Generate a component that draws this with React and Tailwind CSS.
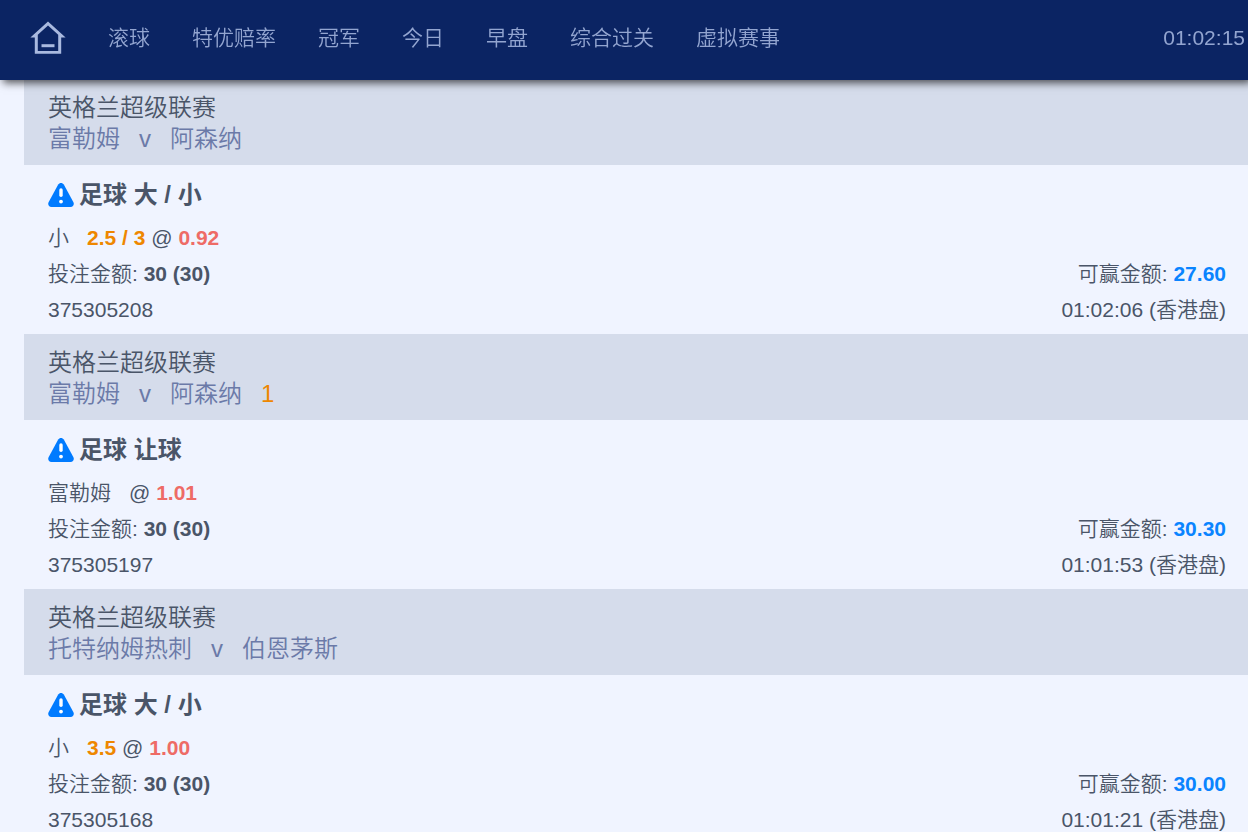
const navItems = ['滚球', '特优赔率', '冠军', '今日', '早盘', '综合过关', '虚拟赛事'];

const bets = [
  {
    id: '375305208',
    league: '英格兰超级联赛',
    home: '富勒姆',
    away: '阿森纳',
    market: '足球 大 / 小',
    pick: '小',
    line: '2.5 / 3',
    odds: '0.92',
    stake: '30 (30)',
    win: '27.60',
    time: '01:02:06',
  },
  {
    id: '375305197',
    league: '英格兰超级联赛',
    home: '富勒姆',
    away: '阿森纳',
    handicap: '1',
    market: '足球 让球',
    pick: '富勒姆',
    odds: '1.01',
    stake: '30 (30)',
    win: '30.30',
    time: '01:01:53',
  },
  {
    id: '375305168',
    league: '英格兰超级联赛',
    home: '托特纳姆热刺',
    away: '伯恩茅斯',
    market: '足球 大 / 小',
    pick: '小',
    line: '3.5',
    odds: '1.00',
    stake: '30 (30)',
    win: '30.00',
    time: '01:01:21',
  },
];

function HomeIcon() {
  return (
    <svg viewBox="0 0 36 34" className="h-[34px] w-9" fill="currentColor" fillRule="evenodd" aria-hidden="true">
      <path d="M18 .4 35.6 16.4H31.2V32.8H4.8V16.4H.4ZM18 4.6 28.2 13.8V29.9H7.8V13.8Z" />
      <path d="M11.5 23.2h13v3h-13z" />
    </svg>
  );
}

function WarningIcon() {
  return (
    <svg viewBox="0 0 26 24" className="h-6 w-[26px] shrink-0" aria-hidden="true">
      <path
        fill="#007bff"
        d="M10.2 1.6C11.4-.5 14.6-.5 15.8 1.6L25.3 18.9C26.6 21.3 25.2 24 22.6 24H3.4C.8 24-.6 21.3.7 18.9Z"
      />
      <path d="M13 7v5.2" stroke="#fff" strokeWidth="3.4" strokeLinecap="round" />
      <circle cx="13" cy="18.6" r="1.9" fill="#fff" />
    </svg>
  );
}

function Bet({ bet }) {
  return (
    <article>
      <header className="bg-[#d5dceb] pt-[13px] pr-[22px] pb-[11px] pl-6 text-2xl leading-[31px]">
        <div>{bet.league}</div>
        <div className="flex gap-[19px] text-[#6b7aa8]">
          <span>{bet.home}</span>
          <span>v</span>
          <span>{bet.away}</span>
          {bet.handicap && <span className="text-[#ee8700]">{bet.handicap}</span>}
        </div>
      </header>
      <div className="pt-3 pr-[22px] pb-1.5 pl-6">
        <h2 className="mb-[7px] flex items-center gap-[5px] text-2xl leading-9 font-bold">
          <WarningIcon />
          {bet.market}
        </h2>
        <div className="text-[21px] leading-9">
          <div>
            <span className="mr-[18px]">{bet.pick}</span>
            {bet.line && <b className="font-bold text-[#ee8700]">{bet.line} </b>}
            @ <b className="font-bold text-[#ee6b66]">{bet.odds}</b>
          </div>
          <div className="flex justify-between">
            <span>
              投注金额: <b className="font-bold">{bet.stake}</b>
            </span>
            <span>
              可赢金额: <b className="font-bold text-[#0a84ff]">{bet.win}</b>
            </span>
          </div>
          <div className="flex justify-between">
            <span>{bet.id}</span>
            <span>{bet.time} (香港盘)</span>
          </div>
        </div>
      </div>
    </article>
  );
}

export default function App() {
  return (
    <div className="min-h-screen bg-[#f0f4ff] font-['Liberation_Sans','Noto_Sans_CJK_SC',sans-serif] font-[350] text-[#4a5568]">
      <header className="fixed inset-x-0 top-0 z-10 flex h-20 items-center justify-between bg-[#0b2463] pr-[3px] pb-1 pl-[30px] text-[21px] text-[#93a5d0] shadow-[3px_3px_8px_rgba(0,0,0,0.65)]">
        <nav className="flex items-center gap-[42px]">
          <a href="#home" aria-label="首页" className="text-[#a9b9df]">
            <HomeIcon />
          </a>
          {navItems.map((item) => (
            <a key={item} href={`#${item}`}>
              {item}
            </a>
          ))}
        </nav>
        <time>01:02:15</time>
      </header>
      <main className="pt-[79px] pl-6">
        {bets.map((bet) => (
          <Bet key={bet.id} bet={bet} />
        ))}
      </main>
    </div>
  );
}
